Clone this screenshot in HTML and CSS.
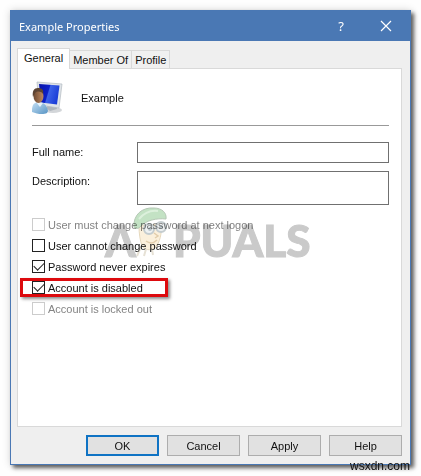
FILE: index.html
```html
<!DOCTYPE html>
<html lang="en">
<head>
    <meta charset="UTF-8">
    <meta name="viewport" content="width=device-width, initial-scale=1.0">
    <title>Example Properties</title>
    <link rel="stylesheet" href="styles.css">
</head>
<body>
    <main class="dialog">
        <header class="titlebar">
            <h1>Example Properties</h1>
            <button class="title-button" aria-label="Help topics">?</button>
            <button class="title-button" aria-label="Close">
                <svg width="12" height="12" viewBox="0 0 12 12"><path d="M1 1l10 10M11 1L1 11" stroke="#fff" stroke-width="1.2" fill="none"/></svg>
            </button>
        </header>

        <div class="content">
            <nav class="tabs">
                <button class="tab active">General</button>
                <button class="tab">Member Of</button>
                <button class="tab">Profile</button>
            </nav>

            <section class="panel">
                <div class="user">
                    <svg class="user-icon" width="32" height="34" viewBox="0 0 32 34">
                        <defs>
                            <linearGradient id="screen" x1="0" y1="0" x2="1" y2="0.3">
                                <stop offset="0" stop-color="#0712a8"/>
                                <stop offset="0.5" stop-color="#0c20c8"/>
                                <stop offset="0.55" stop-color="#3c62e8"/>
                                <stop offset="1" stop-color="#1c3fd8"/>
                            </linearGradient>
                            <linearGradient id="shirt" x1="0" y1="0" x2="1" y2="1">
                                <stop offset="0" stop-color="#c5e0f4"/>
                                <stop offset="1" stop-color="#5794c4"/>
                            </linearGradient>
                            <linearGradient id="face" x1="0" y1="0" x2="1" y2="0">
                                <stop offset="0" stop-color="#6e4a32"/>
                                <stop offset="1" stop-color="#c08a60"/>
                            </linearGradient>
                        </defs>
                        <ellipse cx="21" cy="29" rx="9" ry="3" fill="#d3d6d9"/>
                        <path d="M17 22l7 2 1 4-7 2-4-3z" fill="#aeb5bc"/>
                        <path d="M5 1l25 2-3 24-20-3z" fill="#dfe4e8" stroke="#b3bac1" stroke-width="0.7"/>
                        <path d="M7 3l20.500 1.500-2.500 19-16-2z" fill="url(#screen)"/>
                        <path d="M0 29c0-6 3-8 7-8s8 3 9 9l-1 2c-4 2-10 1-15-1z" fill="url(#shirt)"/>
                        <path d="M4 21l4 5 3-4z" fill="#e9f3fa"/>
                        <ellipse cx="6.500" cy="15" rx="5" ry="7" fill="url(#face)"/>
                        <path d="M1 16c-1-6 1-9 5-9 4 0 6 2 5 6-2-3-6-3-8-1z" fill="#5c4433"/>
                    </svg>
                    <span>Example</span>
                </div>

                <form class="fields">
                    <label for="fullname">Full name:</label>
                    <input type="text" id="fullname" name="fullname">
                    <label for="description">Description:</label>
                    <textarea id="description" name="description"></textarea>
                </form>

                <div class="options">
                    <label class="option disabled"><input type="checkbox" disabled>User must change password at next logon</label>
                    <label class="option"><input type="checkbox">User cannot change password</label>
                    <label class="option"><input type="checkbox" checked>Password never expires</label>
                    <label class="option marked"><input type="checkbox" checked>Account is disabled</label>
                    <label class="option disabled"><input type="checkbox" disabled>Account is locked out</label>

                    <div class="watermark">
                        <span>A</span>
                        <svg width="38" height="52" viewBox="0 0 38 52">
                            <path d="M7 20l22-2c1 10-1 18-6 24-4 3-11 2-13-2-2-6-3-12-3-20z" fill="#fbf0dc" stroke="#e5d8bd"/>
                            <path d="M2 21C1 9 10 1 22 2c8 0 13 5 12 11-9-1-20 1-26 8-2 2-5 2-6 0z" fill="#c3e2c4" stroke="#b5c7b5"/>
                            <path d="M7 13C12 7 19 4 26 5" fill="none" stroke="#dcf0dc" stroke-width="2"/>
                            <circle cx="17" cy="23" r="5" fill="#eef1f2" stroke="#c4cccf" stroke-width="2"/>
                            <circle cx="29" cy="21" r="5" fill="#eef1f2" stroke="#c4cccf" stroke-width="2"/>
                            <circle cx="18" cy="23" r="2" fill="#bcc6ca"/>
                            <circle cx="29" cy="21" r="2" fill="#bcc6ca"/>
                            <path d="M22 27l4 3-3 2M14 35c4 3 8 2 11-1" fill="none" stroke="#e2cdab" stroke-width="1.500"/>
                            <path d="M9 41l-4 9M14 43l-2 7M20 43l1 6" fill="none" stroke="#e6e1d5" stroke-width="2"/>
                        </svg>
                        <span>PUALS</span>
                    </div>
                </div>
            </section>

            <footer class="actions">
                <button class="default">OK</button>
                <button>Cancel</button>
                <button>Apply</button>
                <button>Help</button>
            </footer>
        </div>
        <span class="site">wsxdn.com</span>
    </main>
</body>
</html>
```
FILE: styles.css
```css
* {
    box-sizing: border-box;
}
body {
    display: flex;
    min-height: 100vh;
    margin: 0;
    padding: 10px 10px 11px;
    background-color: #fefefe;
    color: #111;
    font-family: "Liberation Sans", Arial, sans-serif;
    font-size: 11px;
}
button, input, textarea {
    font: inherit;
    color: inherit;
    margin: 0;
}
.dialog {
    position: relative;
    flex: 1;
    display: flex;
    flex-direction: column;
    border: 1px solid #4a78b4;
    background-color: #efefef;
    box-shadow: 3px 3px 4px rgba(0, 0, 0, 0.6), 0 0 8px rgba(0, 0, 0, 0.15);
}

/* Title bar */
.titlebar {
    display: flex;
    align-items: center;
    height: 30px;
    padding: 0 10px 0 8px;
    background-color: #4a78b4;
    color: #fff;
    font-family: "Noto Sans", sans-serif;
}
.titlebar h1 {
    flex: 1;
    margin: 0;
    font-size: 11px;
    font-weight: normal;
}
.title-button {
    display: flex;
    justify-content: center;
    width: 28px;
    margin-left: 17px;
    padding: 0;
    border: none;
    background: none;
    font-size: 13px;
}

.content {
    flex: 1;
    display: flex;
    flex-direction: column;
    padding: 7px 8px 8px 6px;
}

/* Tabs */
.tabs {
    display: flex;
    align-items: flex-end;
    margin-bottom: -1px;
    z-index: 1;
}
.tab {
    height: 19px;
    padding: 0 3px;
    border: 1px solid #d9d9d9;
    border-left: none;
    background-color: #f0f0f0;
}
.tab.active {
    height: 21px;
    padding: 0 6px 2px;
    border-left: 1px solid #d9d9d9;
    border-bottom: none;
    background-color: #fff;
}
.panel {
    flex: 1;
    padding: 13px 12px 0 14px;
    border: 1px solid #d9d9d9;
    background-color: #fff;
}
.user {
    display: flex;
    align-items: center;
    gap: 17px;
    height: 44px;
    padding-bottom: 12px;
    border-bottom: 1px solid #999;
    margin-bottom: 16px;
}
.user-icon {
    flex: none;
}

/* Fields */
.fields {
    display: grid;
    grid-template-columns: 105px 1fr;
    row-gap: 8px;
    line-height: 20px;
}
.fields input,
.fields textarea {
    width: 100%;
    height: 21px;
    padding: 2px 4px;
    border: 1px solid #707070;
    background-color: #fff;
    resize: none;
}
.fields textarea {
    height: 34px;
}

/* Check boxes */
.options {
    position: relative;
    display: flex;
    flex-direction: column;
    align-items: flex-start;
    margin-top: 9px;
}
.option {
    position: relative;
    display: flex;
    align-items: center;
    gap: 3px;
    height: 21px;
}
.option.disabled {
    color: #848484;
}
.option input {
    appearance: none;
    display: grid;
    place-items: center;
    width: 13px;
    height: 13px;
    border: 1px solid #222;
    background-color: #fff;
}
.option input:disabled {
    border-color: #ccc;
}
.option input:checked::before {
    content: "";
    width: 9px;
    height: 5px;
    margin-bottom: 3px;
    border-left: 1px solid #222;
    border-bottom: 1px solid #222;
    transform: rotate(-45deg);
}
.option.marked::after {
    content: "";
    position: absolute;
    inset: 1px -25px 1px -12px;
    border: 3px solid #dd0a0e;
    box-shadow: 2px 2px 3px rgba(0, 0, 0, 0.45);
}

.watermark {
    position: absolute;
    top: -10px;
    left: 73px;
    display: flex;
    color: #cacaca;
    font-family: Lato, sans-serif;
    font-size: 44px;
    font-weight: 900;
    line-height: 72px;
    mix-blend-mode: multiply;
    pointer-events: none;
    -webkit-text-stroke: 1px #cacaca;
}
.watermark svg {
    margin: 2px 3px 0 -4px;
}

/* Bottom buttons */
.actions {
    display: flex;
    justify-content: flex-end;
    gap: 8px;
    margin-top: 8px;
}
.actions button {
    width: 73px;
    height: 21px;
    padding: 0;
    border: 1px solid #adadad;
    background-color: #e1e1e1;
}
.actions .default {
    border: 2px solid #0f73c4;
}

.site {
    position: absolute;
    right: 0;
    bottom: -10px;
    font-size: 12px;
    line-height: 16px;
}
```
